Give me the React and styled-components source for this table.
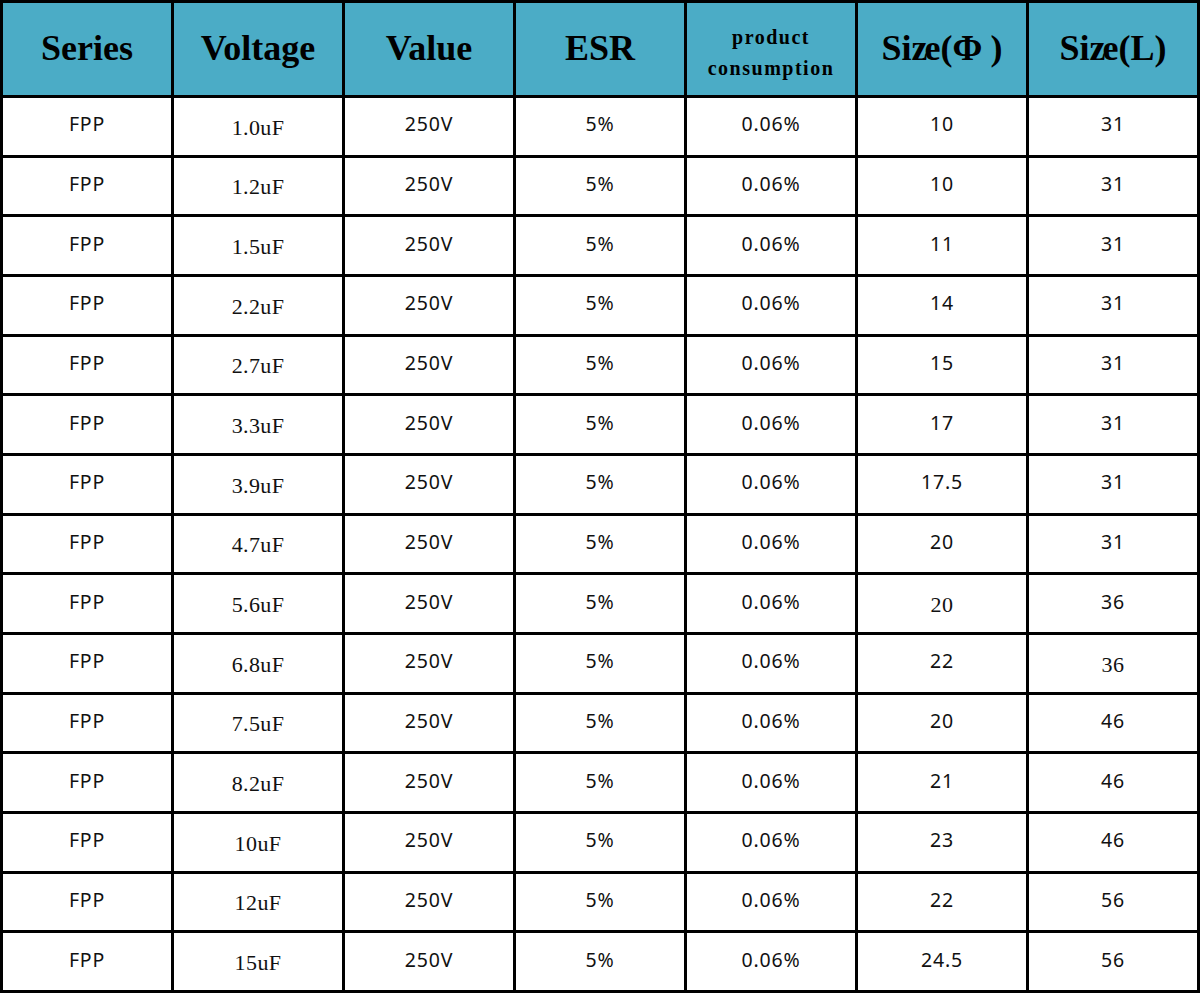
import React from 'react';
import styled, { createGlobalStyle } from 'styled-components';

const GlobalStyle = createGlobalStyle`
  html, body {
    margin: 0;
    padding: 0;
    background: #ffffff;
  }
`;

const Grid = styled.div`
  width: 1200px;
  height: 993px;
  box-sizing: border-box;
  display: grid;
  grid-template-columns: repeat(7, 1fr);
  grid-template-rows: 92px repeat(15, 1fr);
  gap: 3px;
  padding: 3px;
  background: #000000;
`;

const HeadCell = styled.div`
  background: #4bacc6;
  display: flex;
  align-items: center;
  justify-content: center;
  text-align: center;
  color: #000;
  font-family: 'Liberation Serif', 'Times New Roman', serif;
  font-weight: bold;
  font-size: ${({ small }) => (small ? '20px' : '36px')};
  letter-spacing: ${({ small }) => (small ? '1.5px' : '0')};
  line-height: ${({ small }) => (small ? '31px' : '1')};
  padding-top: ${({ small }) => (small ? '8px' : '0')};
  padding-bottom: ${({ small }) => (small ? '0' : '2px')};
  box-sizing: border-box;
`;

const Tight = styled.span`
  letter-spacing: -3px;
`;

const Phi = styled.span`
  margin-right: 8px;
`;

const Cell = styled.div`
  background: #ffffff;
  display: flex;
  align-items: center;
  justify-content: center;
  color: #111;
  font-family: ${({ serif }) =>
    serif
      ? "'Liberation Serif', 'Times New Roman', serif"
      : "'Noto Sans', 'Open Sans', sans-serif"};
  font-size: ${({ serif }) => (serif ? '22px' : '19.5px')};
  letter-spacing: ${({ serif }) => (serif ? '0.4px' : '0.8px')};
  padding-bottom: ${({ serif }) => (serif ? '0' : '5px')};
  padding-top: ${({ serif }) => (serif ? '3px' : '0')};
  box-sizing: border-box;
`;

const rows = [
  ['1.0uF', '10', '31'],
  ['1.2uF', '10', '31'],
  ['1.5uF', '11', '31'],
  ['2.2uF', '14', '31'],
  ['2.7uF', '15', '31'],
  ['3.3uF', '17', '31'],
  ['3.9uF', '17.5', '31'],
  ['4.7uF', '20', '31'],
  ['5.6uF', '20', '36', 'phi'],
  ['6.8uF', '22', '36', 'len'],
  ['7.5uF', '20', '46'],
  ['8.2uF', '21', '46'],
  ['10uF', '23', '46'],
  ['12uF', '22', '56'],
  ['15uF', '24.5', '56'],
];

export default function App() {
  return (
    <>
      <GlobalStyle />
      <Grid>
        <HeadCell>Series</HeadCell>
        <HeadCell>Voltage</HeadCell>
        <HeadCell>Value</HeadCell>
        <HeadCell>ESR</HeadCell>
        <HeadCell small>
          product
          <br />
          consumption
        </HeadCell>
        <HeadCell>
          Si<Tight>z</Tight>e(<Phi>Φ</Phi>)
        </HeadCell>
        <HeadCell>
          Si<Tight>z</Tight>e(L)
        </HeadCell>
        {rows.map(([cap, phi, len, odd], i) => (
          <React.Fragment key={i}>
            <Cell>FPP</Cell>
            <Cell serif>{cap}</Cell>
            <Cell>250V</Cell>
            <Cell>5%</Cell>
            <Cell>0.06%</Cell>
            <Cell serif={odd === 'phi'}>{phi}</Cell>
            <Cell serif={odd === 'len'}>{len}</Cell>
          </React.Fragment>
        ))}
      </Grid>
    </>
  );
}
